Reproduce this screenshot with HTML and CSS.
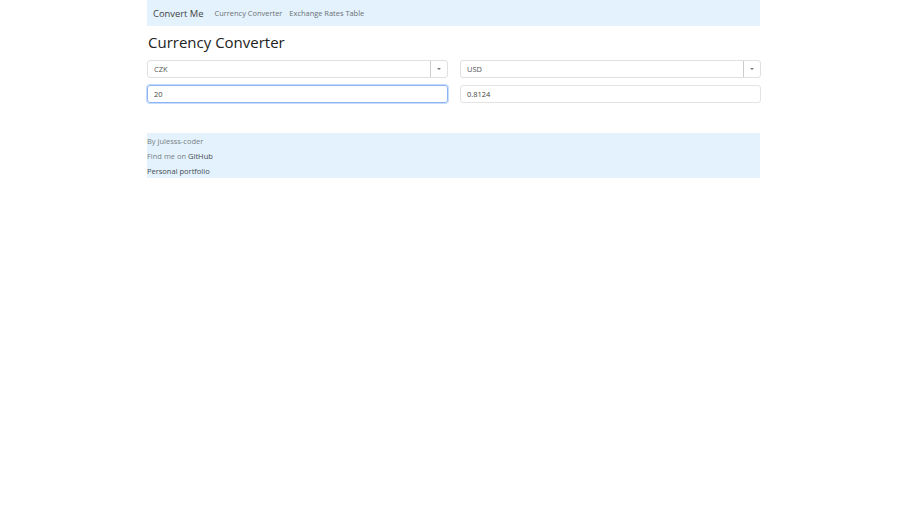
FILE: index.html
```html
<!DOCTYPE html>
<html>
<head>
<meta charset="utf-8">
<link rel="stylesheet" href="styles.css">
</head>
<body>
<div class="container">
  <nav class="navbar">
    <span class="brand">Convert Me</span>
    <a class="nav-link">Currency Converter</a>
    <a class="nav-link">Exchange Rates Table</a>
  </nav>
  <h1 class="title">Currency Converter</h1>
  <div class="grid">
    <div class="select"><span class="select-value">CZK</span><span class="select-btn"><span class="caret"></span></span></div>
    <div class="select"><span class="select-value">USD</span><span class="select-btn"><span class="caret"></span></span></div>
    <div class="input focused">20</div>
    <div class="input">0.8124</div>
  </div>
  <footer class="footer">
    <div class="f-line muted">By julesss-coder</div>
    <div class="f-line muted">Find me on <span class="dark">GitHub</span></div>
    <div class="f-line dark">Personal portfolio</div>
  </footer>
</div>
</body>
</html>
```
FILE: styles.css
```css
html, body { margin: 0; padding: 0; background: #fff; }
body { font-family: "Open Sans", "Noto Sans", sans-serif; color: #333; }
.container { width: 613px; margin-left: 147px; }
.navbar { height: 26px; background: #e3f2fd; display: flex; align-items: center; padding-left: 6px; box-sizing: border-box; }
.brand { font-size: 9.4px; color: #444; margin-right: 11px; }
.nav-link { font-size: 7.45px; color: #6b6f73; margin-right: 7px; }
.title { font-weight: 400; font-size: 15px; margin: 7px 0 0 1px; color: #222; line-height: 18px; height: 27px; }
.grid { display: grid; grid-template-columns: 301px 301px; column-gap: 12px; row-gap: 7px; }
.select { height: 18px; border: 1px solid #e0e0e0; border-radius: 3px; box-sizing: border-box; display: flex; align-items: center; }
.select-value { flex: 1; font-size: 7.5px; color: #555; padding-left: 6px; }
.select-btn { width: 16px; height: 16px; border-left: 1px solid #ccc; display: flex; align-items: center; justify-content: center; }
.caret { width: 0; height: 0; border-left: 2px solid transparent; border-right: 2px solid transparent; border-top: 2px solid #777; }
.input { height: 18px; border: 1px solid #e3e3e3; border-radius: 3px; box-sizing: border-box; font-size: 7.5px; color: #444; padding-left: 6px; display: flex; align-items: center; }
.input.focused { border: 1px solid #8cb4f5; box-shadow: 0 0 0 1px #c8dcfb; }
.footer { margin-top: 30px; background: #e3f2fd; padding: 1px 0 0 0; }
.f-line { font-size: 7.5px; height: 15px; line-height: 15px; }
.f-line:last-child { height: 14px; }
.muted { color: #7a7f85; }
.dark { color: #454a50; }
```
